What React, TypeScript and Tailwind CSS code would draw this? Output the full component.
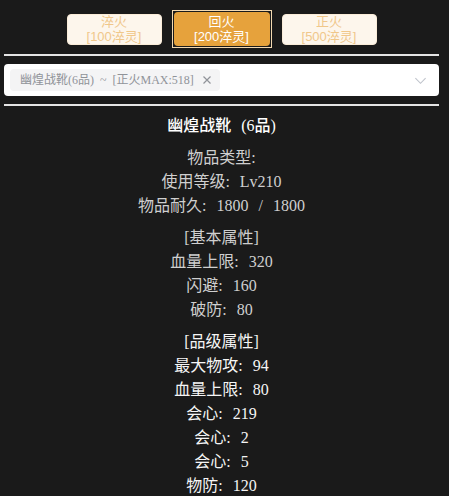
import React from 'react';

const textFont = { fontFamily: '"Liberation Serif", "Noto Sans CJK SC", serif' };
const uiFont = { fontFamily: '"Liberation Sans", "Noto Sans CJK SC", sans-serif' };

const basicInfo = ['物品类型:', '使用等级: Lv210', '物品耐久: 1800 / 1800'];
const baseAttrs = ['血量上限: 320', '闪避: 160', '破防: 80'];
const gradeAttrs = ['最大物攻: 94', '血量上限: 80', '会心: 219', '会心: 2', '会心: 5', '物防: 120'];

const App: React.FC = () => {
  return (
    <div className="min-h-screen bg-[#1a1a1a] overflow-hidden">
      <div className="ml-[4px] w-[435px]">
        {/* Fire level buttons */}
        <div className="pt-[10px] flex items-center justify-center gap-[10px]" style={uiFont}>
          <button className="w-[95px] h-[31px] rounded-[4px] bg-[#fdf6ec] border border-[#faecd8] text-[#f0c78a] text-[13px] leading-[15px] flex flex-col items-center justify-center">
            <span>淬火</span>
            <span>[100淬灵]</span>
          </button>
          <div className="border border-[#f3d9b1] p-px">
            <button className="w-[96px] h-[34px] rounded-[4px] bg-[#e6a23c] text-white text-[13px] leading-[15px] flex flex-col items-center justify-center">
              <span>回火</span>
              <span>[200淬灵]</span>
            </button>
          </div>
          <button className="w-[95px] h-[31px] rounded-[4px] bg-[#fdf6ec] border border-[#faecd8] text-[#f0c78a] text-[13px] leading-[15px] flex flex-col items-center justify-center">
            <span>正火</span>
            <span>[500淬灵]</span>
          </button>
        </div>

        <div className="mt-[6px] h-[2px] bg-[#e4e4e4]" />

        {/* Item select */}
        <div className="mt-[8px] h-[32px] rounded-[4px] bg-white flex items-center pl-[6px] pr-[12px]">
          <div className="h-[22px] w-[210px] rounded-[4px] bg-[#f4f4f5] flex items-center pl-[10px] pr-[8px] text-[12px] text-[#909399] [word-spacing:3px]" style={textFont}>
            <span className="flex-1 whitespace-nowrap">幽煌战靴(6品) ~ [正火MAX:518]</span>
            <svg width="10" height="10" viewBox="0 0 10 10" className="text-[#909399]">
              <path d="M1.5 1.5 L8.5 8.5 M8.5 1.5 L1.5 8.5" stroke="currentColor" strokeWidth="1.2" />
            </svg>
          </div>
          <div className="flex-1" />
          <svg width="13" height="13" viewBox="0 0 14 14">
            <path d="M1.5 4.5 L7 10 L12.5 4.5" stroke="#c0c4cc" strokeWidth="1.2" fill="none" />
          </svg>
        </div>

        <div className="mt-[8px] h-[2px] bg-[#e4e4e4]" />

        {/* Item detail */}
        <div className="mt-2 text-center text-[16px] leading-6 [word-spacing:6px]" style={textFont}>
          <div className="text-white font-medium">幽煌战靴 (6品)</div>
          <div className="mt-2 text-[#cfcfcf]">
            {basicInfo.map((t) => (
              <div key={t}>{t}</div>
            ))}
          </div>
          <div className="mt-2 text-[#cfcfcf]">
            <div>[基本属性]</div>
            {baseAttrs.map((t) => (
              <div key={t}>{t}</div>
            ))}
          </div>
          <div className="mt-2 text-[#f5f5f5]">
            <div>[品级属性]</div>
            {gradeAttrs.map((t, i) => (
              <div key={i}>{t}</div>
            ))}
          </div>
        </div>
      </div>
    </div>
  );
};

export default App;
